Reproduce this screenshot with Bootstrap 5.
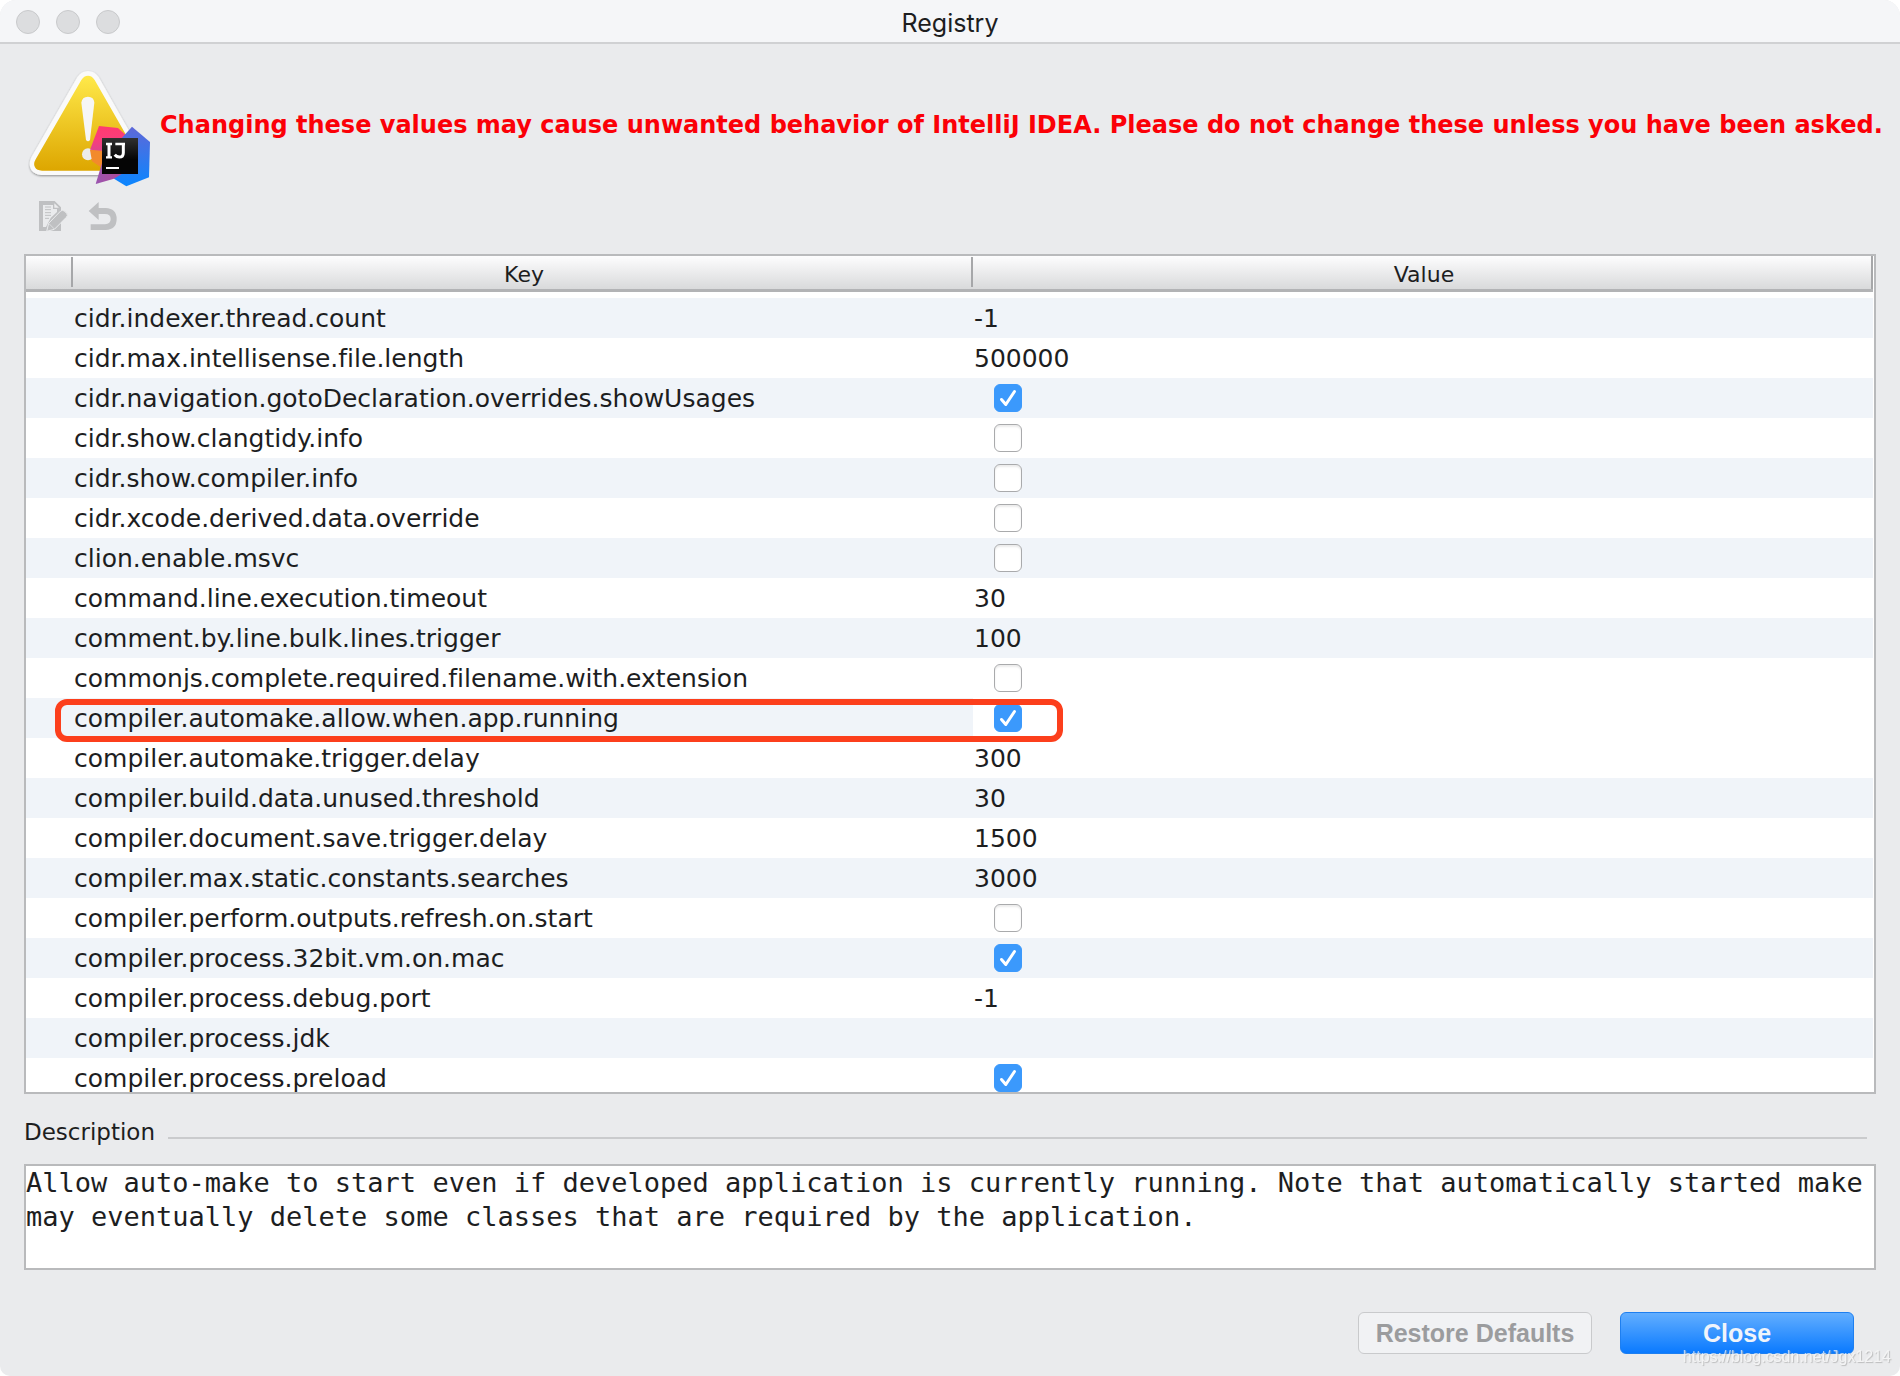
<!DOCTYPE html>
<html lang="en">
<head>
<meta charset="utf-8">
<meta name="viewport" content="width=device-width, initial-scale=1">
<title>Registry</title>
<link href="https://cdn.jsdelivr.net/npm/bootstrap@5.3.0/dist/css/bootstrap.min.css" rel="stylesheet">
<style>
  :root { --ui-font: "DejaVu Sans", sans-serif; --line: #b9babc; --ink: #1d1e1f; }
  html { background: #fff; }
  body { background: #fff; font-family: var(--ui-font); color: var(--ink); font-variant-ligatures: none; }
  .dialog { background: #eaebed; border-radius: 16px 16px 10px 10px; min-height: 900px; }
  .titlebar { height: 44px; background: #f5f6f8; border-bottom: 2px solid #d0d1d3; font: 25px/36px Inter, sans-serif; padding: 2px 0 0 16px; }
  .titlebar .lamps { gap: 16px; }
  .titlebar .caption-text { padding-top: 2px; }
  .lamp { width: 24px; height: 24px; border-radius: 50%; background: #dcdddf; border: 1px solid #c8c9cb; }
  .dialog-body { padding: 24px 24px 22px; min-height: 0; }
  .warning { gap: 8px; padding-left: 4px; margin-right: -20px; }
  .warning-text { font-size: 24px; line-height: 32px; font-weight: 700; color: #fb0007; padding-bottom: 6px; }
  .tools { gap: 20px; padding: 12px 14px 22px; }
  .tools button { background: none; border: 0; padding: 0; line-height: 0; }
  .grid-box { border: 2px solid var(--line); background: #fff; scrollbar-width: none; overflow-y: auto; min-height: 0; }
  .grid-box::-webkit-scrollbar { display: none; }
  .reg { width: calc(100% - 1px); table-layout: fixed; border-collapse: separate; border-spacing: 0; }
  .reg .c-mark { width: 47px; }
  .reg thead th { position: sticky; top: 0; z-index: 2; height: 36px; padding: 4px 0 0 2px; font-size: 22px; line-height: 29px; font-weight: 400; text-align: center;
    background: linear-gradient(#fdfdfe, #d9dadb 33px); border-bottom: 3px solid #b2b3b5; }
  .reg thead th::after { content: ""; position: absolute; right: 0; top: 1px; width: 2px; height: 30px; background: #a6a7a9; }
  .reg thead th:last-child::after { top: 0; height: 33px; }
  .reg td { height: 40px; padding: 2px 1px 0; font-size: 25px; line-height: 38px; white-space: nowrap; }
  .reg tbody tr:nth-child(even) td { background: #f0f4f9; }
  .reg tbody tr.editing td:last-child { background: #fff; }
  .reg td.ringed { position: relative; }
  .ring { position: absolute; z-index: 1; left: -18px; right: -90px; top: 1px; height: 43px; border: 6px solid #fc3f1c; border-radius: 12px; pointer-events: none; }
  .reg .form-check-input { display: block; width: 28px; height: 28px; margin: 0 0 2px 20px; border: 1px solid #a9aaac; border-radius: 6px; box-shadow: inset 0 2px 2px #ececec; background-color: #fff; }
  .reg .form-check-input:checked { background-color: #3b99fc; border-color: #3b99fc; box-shadow: none; background-size: 28px 28px;
    background-image: url("data:image/svg+xml,%3csvg xmlns='http://www.w3.org/2000/svg' viewBox='0 0 28 28'%3e%3cpath d='M7.500 15.500l4.300 5L20.500 7.500' fill='none' stroke='white' stroke-width='3' stroke-linecap='round' stroke-linejoin='round'/%3e%3c/svg%3e"); }
  .desc-head { font-size: 23px; line-height: 32px; gap: 13px; padding: 22px 9px 16px 0; }
  .desc-head span { height: 2px; background: #cacbcd; margin-top: 12px; }
  .desc-text { display: block; width: 100%; height: 106px; border: 2px solid var(--line); padding: 0; resize: none; background: #fff; color: var(--ink); outline: 0;
    font: 27px/34px "DejaVu Sans Mono", monospace; overflow: hidden; }
  .actions { gap: 28px; padding: 42px 22px 0; }
  .actions .btn { width: 234px; height: 42px; padding: 0; border-radius: 6px; font: bold 25px/38px "Liberation Sans", sans-serif; }
  .btn-restore, .btn-restore:disabled { background: #f1f2f4; border: 1px solid #c9cacc; color: #9b9c9e; opacity: 1; }
  .btn-close-dialog, .btn-close-dialog:hover { background: linear-gradient(#62aeff, #0a7aff); border: 1px solid #1e7ff0; color: #f0f4fb; }
  .stamp { position: absolute; right: 9px; bottom: 8px; font: 16px/22px "Liberation Sans", sans-serif; color: #f8f8f8; text-shadow: 1px 1px 1px #a8a8a8; opacity: .7; }
</style>
</head>
<body>
<main class="dialog vh-100 d-flex flex-column position-relative overflow-hidden">
  <header class="titlebar d-flex align-items-center position-relative flex-shrink-0">
    <div class="lamps d-flex"><span class="lamp"></span><span class="lamp"></span><span class="lamp"></span></div>
    <div class="caption-text position-absolute start-0 end-0 text-center pe-none">Registry</div>
  </header>
  <div class="dialog-body d-flex flex-column flex-grow-1">
    <div class="warning d-flex align-items-center">
      <svg class="flex-shrink-0" width="124" height="120" viewBox="84 204 372 360" aria-hidden="true">
        <defs>
          <linearGradient id="gold" x1="0" y1="0" x2="0" y2="1"><stop offset="0" stop-color="#ffe94a"/><stop offset="1" stop-color="#dda600"/></linearGradient>
          <linearGradient id="pink" x1="0" y1="0" x2="0" y2="1"><stop offset="0" stop-color="#ff3b70"/><stop offset=".5" stop-color="#fb3d7a"/><stop offset="1" stop-color="#e0448c"/></linearGradient>
          <linearGradient id="blue" x1="0" y1="0" x2="0" y2="1"><stop offset="0" stop-color="#5f68d8"/><stop offset="1" stop-color="#0a86ff"/></linearGradient>
          <linearGradient id="purple" x1="0" y1="0" x2="1" y2="0"><stop offset="0" stop-color="#9a55b0"/><stop offset="1" stop-color="#b04a98"/></linearGradient>
          <linearGradient id="black" x1="0" y1="0" x2="0" y2="1"><stop offset="0" stop-color="#303030"/><stop offset=".6" stop-color="#050505"/></linearGradient>
          <filter id="sh" x="-10%" y="-10%" width="120%" height="120%"><feDropShadow dx="0" dy="3" stdDeviation="3" flood-opacity=".4"/></filter>
        </defs>
        <path filter="url(#sh)" fill="#fafafa" d="M232 231Q244 213 264 213Q284 213 296 231L432 472Q442 494 432 510Q424 524 404 525H124Q104 524 94 510Q84 494 94 472Z"/>
        <path fill="url(#gold)" d="M244 240Q252 227 264 227Q276 227 284 240L420 478Q428 492 422 502Q416 512 402 512H126Q110 512 105 502Q99 492 107 478Z"/>
        <path fill="#f6f6f6" d="M244 308Q246 290 264 290Q282 290 283 308L270 420Q264 428 258 420Z"/>
        <circle cx="264" cy="463" r="18" fill="#ececec"/>
        <path fill="#f28a2c" d="M270 450H306V504L276 484Z"/>
        <path fill="url(#pink)" d="M297 378L354 384L378 406L372 440L306 452L270 449Z"/>
        <path fill="url(#blue)" d="M396 380L450 426L447 532L379 559L342 536L360 420Z"/>
        <path fill="url(#purple)" d="M306 490L366 521L342 536L287 552Z"/>
        <path fill="url(#black)" d="M306 414H414V522H306Z"/>
        <path fill="none" stroke="#fff" stroke-width="7" d="M318 432H336M318 472H336M346 432H375"/>
        <path fill="none" stroke="#fff" stroke-width="9" d="M327 430V474M370 430V458Q370 471 358 471Q350 471 344 464"/>
        <path fill="#fff" d="M318 501H357V507H318Z"/>
      </svg>
      <div class="warning-text">Changing these values may cause unwanted behavior of IntelliJ IDEA. Please do not change these unless you have been asked.</div>
    </div>
    <div class="tools d-flex">
      <button type="button" aria-label="Edit value" disabled>
        <svg width="30" height="32" viewBox="114 600 90 96"><path fill="#bfc0c2" fill-rule="evenodd" d="M117 603H164L183 622V693H117ZM129 615V681H138L152 654L171 636V627H159V615Z"/><path fill="#ececee" d="M163 610V623H177Z"/><path stroke="#bfc0c2" stroke-width="3" d="M135 621H153M135 629H153M135 638H153M135 646H153M135 655H147"/><path fill="#bfc0c2" stroke="#eaebed" stroke-width="3" d="M140 694L146 670L182 633Q188 628 194 634L200 640Q205 646 199 652L163 688Z"/><path stroke="#eaebed" stroke-width="2" d="M147 671L163 687"/></svg>
      </button>
      <button type="button" aria-label="Revert to default" disabled>
        <svg width="30" height="32" viewBox="262 600 90 96"><path fill="#bfc0c2" d="M264 633L294 606V624H315Q348 626 348 657Q348 688 315 690H270V673H313Q330 672 330 657Q330 642 313 642H294V660Z"/></svg>
      </button>
    </div>
    <div class="grid-box flex-grow-1" id="grid">
      <table class="reg">
        <colgroup><col class="c-mark"><col><col></colgroup>
        <thead><tr><th aria-label="Changed"></th><th>Key</th><th>Value</th></tr></thead>
        <tbody id="rows">
          <tr><td></td><td>cidr.debugger</td><td></td></tr>
        </tbody>
      </table>
    </div>
    <div class="desc-head d-flex align-items-center"><label for="desc">Description</label><span class="flex-grow-1"></span></div>
    <textarea class="desc-text flex-shrink-0" id="desc" readonly>Allow auto-make to start even if developed application is currently running. Note that automatically started make may eventually delete some classes that are required by the application.</textarea>
    <div class="actions d-flex justify-content-end">
      <button type="button" class="btn btn-restore" disabled>Restore Defaults</button>
      <button type="button" class="btn btn-close-dialog">Close</button>
    </div>
  </div>
  <div class="stamp">https://blog.csdn.net/Jgx1214</div>
</main>
<script src="https://cdn.jsdelivr.net/npm/bootstrap@5.3.0/dist/js/bootstrap.bundle.min.js"></script>
<script>
  const entries = [
    ["cidr.indexer.thread.count", "-1"],
    ["cidr.max.intellisense.file.length", "500000"],
    ["cidr.navigation.gotoDeclaration.overrides.showUsages", true],
    ["cidr.show.clangtidy.info", false],
    ["cidr.show.compiler.info", false],
    ["cidr.xcode.derived.data.override", false],
    ["clion.enable.msvc", false],
    ["command.line.execution.timeout", "30"],
    ["comment.by.line.bulk.lines.trigger", "100"],
    ["commonjs.complete.required.filename.with.extension", false],
    ["compiler.automake.allow.when.app.running", true],
    ["compiler.automake.trigger.delay", "300"],
    ["compiler.build.data.unused.threshold", "30"],
    ["compiler.document.save.trigger.delay", "1500"],
    ["compiler.max.static.constants.searches", "3000"],
    ["compiler.perform.outputs.refresh.on.start", false],
    ["compiler.process.32bit.vm.on.mac", true],
    ["compiler.process.debug.port", "-1"],
    ["compiler.process.jdk", ""],
    ["compiler.process.preload", true]
  ];
  const selected = "compiler.automake.allow.when.app.running";
  const body = document.getElementById("rows");
  for (const [key, value] of entries) {
    const isFlag = typeof value === "boolean";
    const cell = isFlag
      ? `<input class="form-check-input" type="checkbox" id="${key}"${value ? " checked" : ""}>`
      : value;
    const name = isFlag ? `<label for="${key}">${key}</label>` : key;
    const on = key === selected;
    body.insertAdjacentHTML("beforeend",
      `<tr class="${on ? "editing" : ""}"><td></td><td class="${on ? "ringed" : ""}">${name}${on ? '<span class="ring"></span>' : ""}</td><td>${cell}</td></tr>`);
  }
  // open scrolled so that the first row is almost out of view
  document.getElementById("grid").scrollTop = 34;
</script>
</body>
</html>
